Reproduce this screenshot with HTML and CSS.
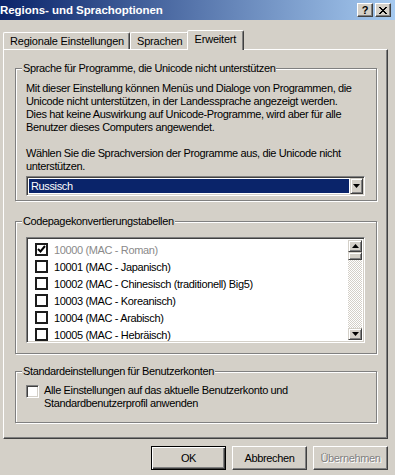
FILE: index.html
```html
<!DOCTYPE html>
<html lang="de">
<head>
<meta charset="utf-8">
<title>Regions- und Sprachoptionen</title>
<link rel="stylesheet" href="styles.css">
</head>
<body>
<div class="window">
  <div class="titlebar">
    <span class="title">Regions- und Sprachoptionen</span>
    <div class="tb-buttons">
      <span class="tb-btn help">?</span>
      <span class="tb-btn close"><svg width="8" height="7" viewBox="0 0 8 7"><path d="M0 0h2v1h-2zM6 0h2v1h-2zM1 1h2v1h-2zM5 1h2v1h-2zM2 2h4v1h-4zM3 3h2v1h-2zM2 4h4v1h-4zM1 5h2v1h-2zM5 5h2v1h-2zM0 6h2v1h-2zM6 6h2v1h-2z" fill="#000"/></svg></span>
    </div>
  </div>

  <div class="tabs">
    <div class="tab">Regionale Einstellungen</div>
    <div class="tab">Sprachen</div>
    <div class="tab active">Erweitert</div>
  </div>

  <div class="panel">
    <fieldset class="group g1">
      <legend>Sprache für Programme, die Unicode nicht unterstützen</legend>
      <div class="group-body">
        <p class="text">Mit dieser Einstellung können Menüs und Dialoge von Programmen, die<br>Unicode nicht unterstützen, in der Landessprache angezeigt werden.<br>Dies hat keine Auswirkung auf Unicode-Programme, wird aber für alle<br>Benutzer dieses Computers angewendet.</p>
        <p class="text">Wählen Sie die Sprachversion der Programme aus, die Unicode nicht<br>unterstützen.</p>
        <div class="combo">
          <div class="combo-value">Russisch</div>
          <div class="combo-btn"><svg width="7" height="4" viewBox="0 0 7 4"><path d="M0 0h7L3.5 4z" fill="#000"/></svg></div>
        </div>
      </div>
    </fieldset>

    <fieldset class="group g2">
      <legend>Codepagekonvertierungstabellen</legend>
      <div class="group-body">
        <div class="listbox">
          <ul class="items">
            <li class="item disabled"><span class="cb checked"><svg width="9" height="9" viewBox="0 0 9 9"><path d="M1 4l2.5 2.5L8 1" fill="none" stroke="#000" stroke-width="2"/></svg></span>10000 (MAC - Roman)</li>
            <li class="item"><span class="cb"></span>10001 (MAC - Japanisch)</li>
            <li class="item"><span class="cb"></span>10002 (MAC - Chinesisch (traditionell) Big5)</li>
            <li class="item"><span class="cb"></span>10003 (MAC - Koreanisch)</li>
            <li class="item"><span class="cb"></span>10004 (MAC - Arabisch)</li>
            <li class="item"><span class="cb"></span>10005 (MAC - Hebräisch)</li>
          </ul>
          <div class="scrollbar">
            <div class="sb-btn"><svg width="7" height="4" viewBox="0 0 7 4"><path d="M0 4h7L3.5 0z" fill="#000"/></svg></div>
            <div class="sb-thumb"></div>
            <div class="sb-track"></div>
            <div class="sb-btn"><svg width="7" height="4" viewBox="0 0 7 4"><path d="M0 0h7L3.5 4z" fill="#000"/></svg></div>
          </div>
        </div>
      </div>
    </fieldset>

    <fieldset class="group g3">
      <legend>Standardeinstellungen für Benutzerkonten</legend>
      <div class="group-body">
        <label class="check-row"><span class="cb3d"></span><span>Alle Einstellungen auf das aktuelle Benutzerkonto und<br>Standardbenutzerprofil anwenden</span></label>
      </div>
    </fieldset>
  </div>

  <div class="buttons">
    <button class="btn default">OK</button>
    <button class="btn">Abbrechen</button>
    <button class="btn disabled">Übernehmen</button>
  </div>
</div>
</body>
</html>
```

FILE: styles.css
```css
* { box-sizing: border-box; }
html, body { margin: 0; padding: 0; }
body {
  width: 395px;
  height: 475px;
  overflow: hidden;
  background: #d4d0c8;
  font-family: "Liberation Sans", Arial, sans-serif;
  font-size: 11px;
  letter-spacing: -0.36px;
  color: #000;
}
.window { width: 395px; height: 475px; display: flex; flex-direction: column; }

/* title bar */
.titlebar {
  height: 20px;
  flex: none;
  background: linear-gradient(to right, #0a246a, #a6caf0);
  display: flex;
  align-items: center;
  justify-content: space-between;
  padding: 0 4px 0 0;
}
.title { color: #fff; font-weight: bold; font-size: 11.5px; line-height: 14px; letter-spacing: -0.05px; }
.tb-buttons { display: flex; gap: 2px; }
.tb-btn {
  width: 16px; height: 14px;
  background: #d4d0c8;
  border: 1px solid;
  border-color: #fff #404040 #404040 #fff;
  box-shadow: inset -1px -1px 0 #808080;
  display: flex; align-items: center; justify-content: center;
  font-weight: bold; font-size: 11px; line-height: 12px; letter-spacing: 0;
}

/* tabs */
.tabs {
  flex: none;
  display: flex;
  align-items: flex-end;
  height: 19px;
  margin-top: 10px;
  padding-left: 3px;
}
.tab {
  height: 17px;
  padding: 0 5px 0 6px;
  border: 1px solid;
  border-bottom: 0;
  border-color: #fff #404040 transparent #fff;
  border-radius: 2px 2px 0 0;
  box-shadow: inset -1px 0 0 #808080;
  display: flex; align-items: center;
  line-height: 13px;
  letter-spacing: -0.2px;
  white-space: nowrap;
}
.tab.active {
  position: relative;
  z-index: 1;
  height: 20px;
  margin: 0 -2px -1px -2px;
  padding: 0 7px 3px 7px;
  background: #d4d0c8;
}

/* panel */
.panel {
  flex: none;
  height: 390px;
  margin: 0 7px 0 3px;
  border: 1px solid;
  border-color: #fff #404040 #404040 #fff;
  box-shadow: inset -1px -1px 0 #808080;
  padding: 12px 10px 0 11px;
}
.group {
  margin: 0;
  padding: 0;
  min-width: 0;
  border: 1px solid #808080;
  box-shadow: 1px 1px 0 #fff, inset 1px 1px 0 #fff;
}
.group legend {
  margin-left: 6px;
  padding: 0 1px;
  line-height: 13px;
  background: #d4d0c8;
}
.group-body { padding: 0 11px 0 10px; }
.g1 .group-body { padding-top: 7px; padding-bottom: 4px; }
.g2 { margin-top: 14px; }
.g2 .group-body { padding-top: 9px; padding-bottom: 10px; }
.g3 { margin-top: 11px; }
.g3 .group-body { padding-top: 6px; padding-bottom: 12px; }

.text { margin: 0 0 13px 0; line-height: 13px; white-space: nowrap; }
.text:last-of-type { margin-bottom: 3px; }

/* combo */
.combo {
  height: 20px;
  display: flex;
  border: 1px solid;
  border-color: #808080 #fff #fff #808080;
  box-shadow: inset 1px 1px 0 #404040, inset -1px -1px 0 #d4d0c8;
  background: #fff;
  padding: 2px;
}
.combo-value {
  flex: 1;
  background: #0a246a;
  color: #fff;
  padding-left: 2px;
  line-height: 14px;
  margin-right: 1px;
}
.combo-btn {
  width: 13px;
  margin: -1px -1px -1px 0;
  background: #d4d0c8;
  border: 1px solid;
  border-color: #d4d0c8 #404040 #404040 #d4d0c8;
  box-shadow: inset 1px 1px 0 #fff, inset -1px -1px 0 #808080;
  display: flex; align-items: center; justify-content: center;
}

/* listbox */
.listbox {
  height: 106px;
  display: flex;
  border: 1px solid;
  border-color: #808080 #fff #fff #808080;
  box-shadow: inset 1px 1px 0 #404040, inset -1px -1px 0 #d4d0c8;
  background: #fff;
  padding: 2px;
}
.items { flex: 1; list-style: none; margin: 0; padding: 1px 0 0 6px; }
.item { height: 17px; display: flex; align-items: center; white-space: nowrap; }
.item.disabled { color: #8a8a8a; }
.cb {
  width: 13px; height: 13px;
  border: 2px solid #1c1c1c;
  background: #fff;
  margin-right: 6px;
  display: flex; align-items: center; justify-content: center;
  flex: none;
}
.cb svg { display: block; }
.scrollbar { width: 14px; display: flex; flex-direction: column; }
.sb-btn {
  height: 12px;
  background: #d4d0c8;
  border: 1px solid;
  border-color: #d4d0c8 #404040 #404040 #d4d0c8;
  box-shadow: inset 1px 1px 0 #fff, inset -1px -1px 0 #808080;
  display: flex; align-items: center; justify-content: center;
}
.sb-thumb {
  height: 8px;
  background: #d4d0c8;
  border: 1px solid;
  border-color: #d4d0c8 #404040 #404040 #d4d0c8;
  box-shadow: inset 1px 1px 0 #fff, inset -1px -1px 0 #808080;
}
.sb-track {
  flex: 1;
  background: repeating-conic-gradient(#fff 0 25%, #d4d0c8 0 50%) 0 0 / 2px 2px;
}

/* group 3 */
.check-row { display: flex; align-items: flex-start; line-height: 13px; white-space: nowrap; }
.cb3d {
  width: 13px; height: 13px;
  margin: 1px 5px 0 0;
  flex: none;
  background: #fff;
  border: 1px solid;
  border-color: #808080 #fff #fff #808080;
  box-shadow: inset 1px 1px 0 #404040, inset -1px -1px 0 #d4d0c8;
}

/* bottom buttons */
.buttons {
  flex: none;
  display: flex;
  justify-content: flex-end;
  margin-top: 7px;
  padding-right: 7px;
  gap: 6px;
}
.btn {
  width: 75px;
  height: 24px;
  padding: 0;
  font: inherit;
  letter-spacing: -0.36px;
  color: #000;
  background: #d4d0c8;
  border: 1px solid;
  border-color: #fff #404040 #404040 #fff;
  box-shadow: inset -1px -1px 0 #808080;
}
.btn.default {
  border-color: #000;
  box-shadow: inset 1px 1px 0 #fff, inset -1px -1px 0 #404040, inset -2px -2px 0 #808080;
}
.btn.disabled { color: #808080; text-shadow: 1px 1px 0 #fff; }
```
